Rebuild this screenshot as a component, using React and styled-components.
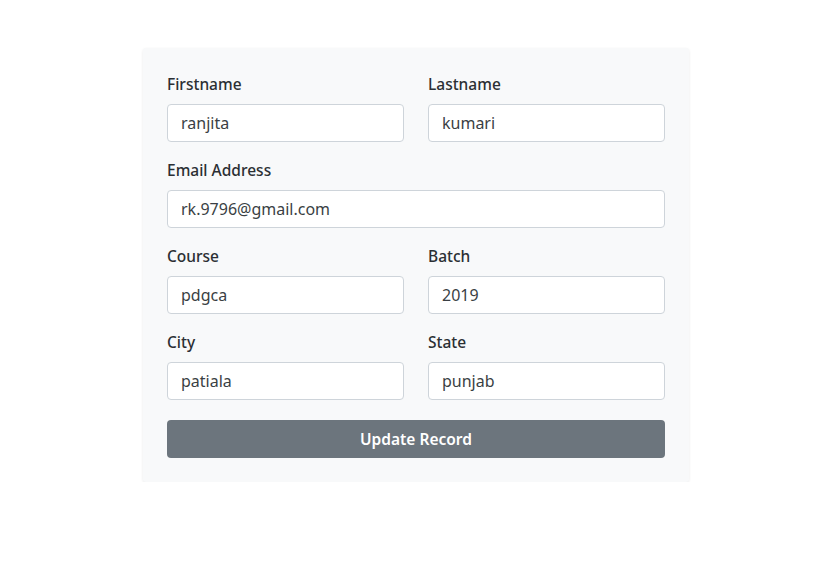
import React from 'react'
import styled, { createGlobalStyle } from 'styled-components'

const Global = createGlobalStyle`
body{
    margin: 0;
    background: #fff;
    font-family: "Noto Sans", "Open Sans", sans-serif;
    color: #212529;
}
`

const Page = styled.div`
display: flex;
justify-content: center;
padding: 48px 0 0 15px;
`

const Card = styled.form`
width: 546px;
box-sizing: border-box;
padding: 24px;
background: #f8f9fa;
border-radius: 3px;
box-shadow: 0 1px 3px rgba(0,0,0,0.09);
display: flex;
flex-direction: column;
gap: 16px;
`

const Row = styled.div`
display: grid;
grid-template-columns: ${({$cols})=>$cols === 1 ? 'minmax(0,1fr)' : 'minmax(0,1fr) minmax(0,1fr)'};
column-gap: 24px;
`

const Field = styled.div`
display: flex;
flex-direction: column;
gap: 8px;
min-width: 0;
label{
    font-size: 15.5px;
    font-weight: 500;
    line-height: 24px;
    color: #2b2f33;
}
`

const Input = styled.input`
width: 100%;
height: 38px;
box-sizing: border-box;
border: 1px solid #ced4da;
border-radius: 4px;
padding: 0 13px;
font-family: inherit;
font-size: 16px;
color: #3a3f44;
background: #fff;
outline: none;
`

const Button = styled.button`
margin-top: 4px;
height: 38px;
border: none;
border-radius: 4px;
background: #6c757d;
color: #fff;
font-family: inherit;
font-size: 15.5px;
font-weight: 600;
cursor: pointer;
`

const fields = [
    [['Firstname', 'ranjita'], ['Lastname', 'kumari']],
    [['Email Address', 'rk.9796@gmail.com']],
    [['Course', 'pdgca'], ['Batch', '2019']],
    [['City', 'patiala'], ['State', 'punjab']],
]

const App = () => {
  return (
    <>
      <Global />
      <Page>
        <Card onSubmit={e => e.preventDefault()}>
          {fields.map((row, i) => (
            <Row key={i} $cols={row.length}>
              {row.map(([label, value]) => (
                <Field key={label}>
                  <label>{label}</label>
                  <Input defaultValue={value} />
                </Field>
              ))}
            </Row>
          ))}
          <Button type="submit">Update Record</Button>
        </Card>
      </Page>
    </>
  )
}

export default App
